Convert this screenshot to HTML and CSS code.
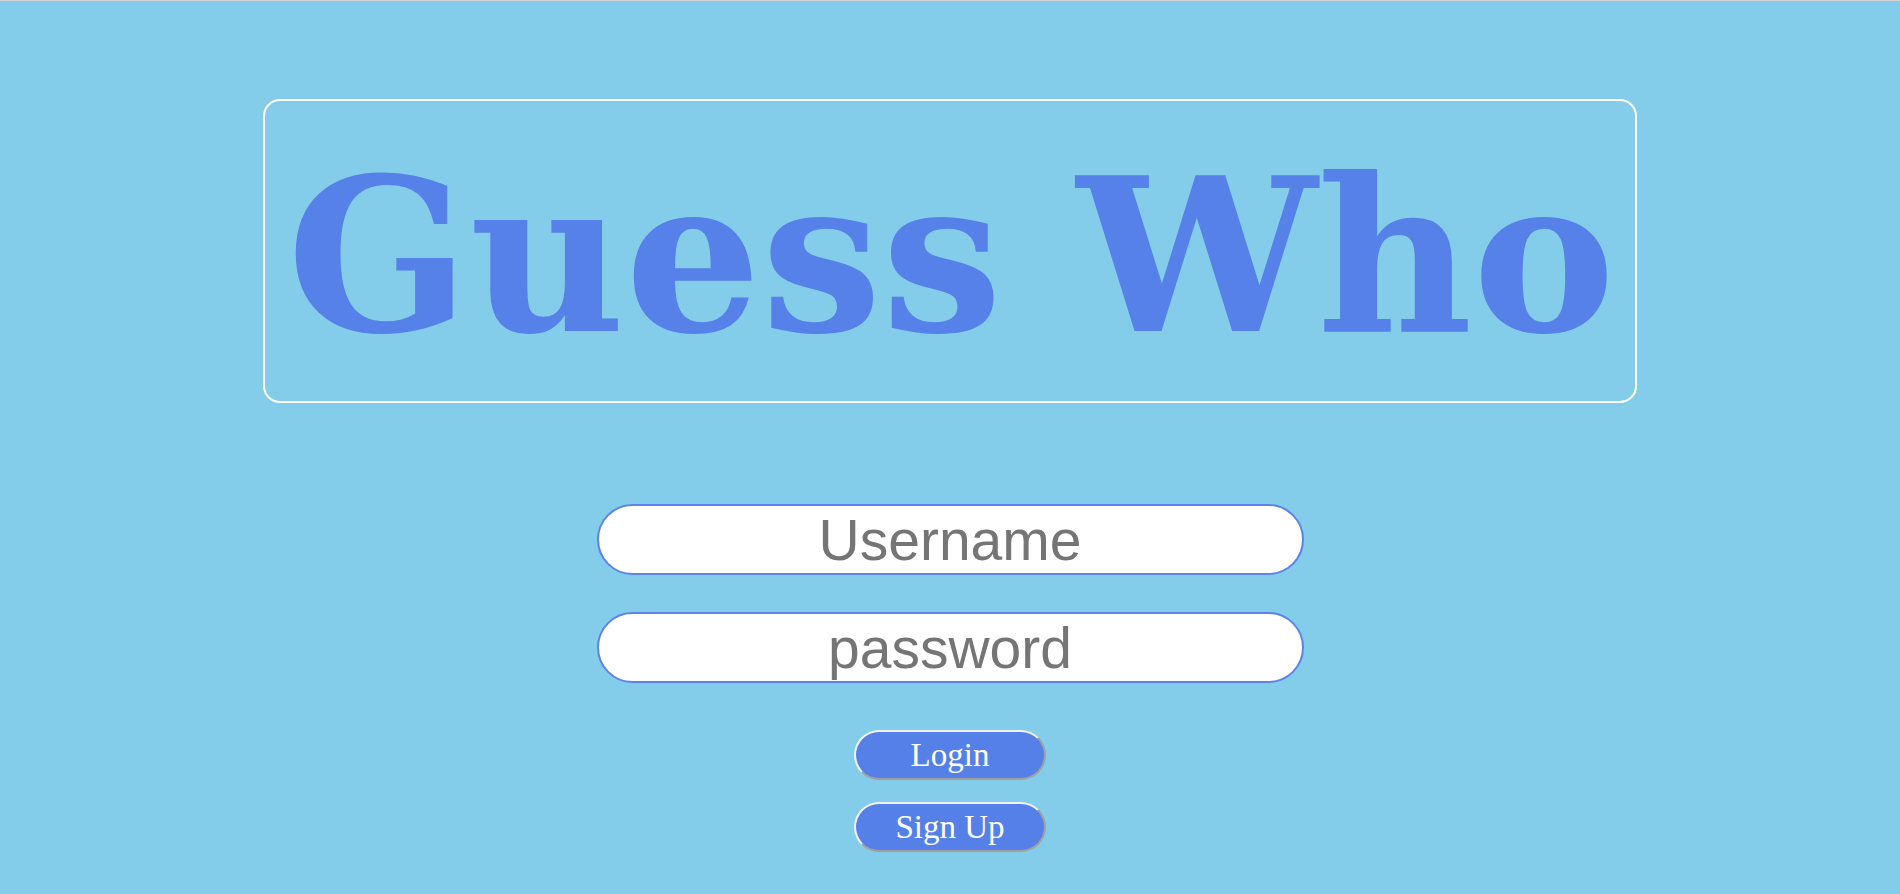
FILE: index.html
```html
<!DOCTYPE html>
<html lang="en">
<head>
<meta charset="utf-8">
<title>Guess Who</title>
<link rel="stylesheet" href="styles.css">
</head>
<body>
<div class="page">
  <header class="title-box">
    <h1 class="title">Guess Who</h1>
  </header>
  <form class="login-form">
    <input class="field" type="text" placeholder="Username">
    <input class="field" type="password" placeholder="password">
    <div class="actions">
      <button class="btn" type="button">Login</button>
      <button class="btn" type="button">Sign Up</button>
    </div>
  </form>
</div>
</body>
</html>
```

FILE: styles.css
```css
html, body {
  margin: 0;
  padding: 0;
  background: #84cdea;
}

.page {
  border-top: 1px solid #d4d4d4;
  min-height: 893px;
  box-sizing: border-box;
}

.title-box {
  width: 1374px;
  height: 304px;
  box-sizing: border-box;
  margin: 98px auto 0;
  border: 2px solid #ffffff;
  border-radius: 17px;
  display: flex;
  align-items: center;
  justify-content: center;
  padding-top: 10px;
  padding-left: 2px;
}

.title {
  margin: 0;
  font-family: "DejaVu Serif", serif;
  font-weight: bold;
  font-size: 214px;
  line-height: 1;
  color: #5681e8;
  white-space: nowrap;
}

.login-form {
  display: flex;
  flex-direction: column;
  align-items: center;
  margin-top: 101px;
}

.field {
  width: 707px;
  height: 71px;
  box-sizing: border-box;
  border: 2px solid #5a84e8;
  border-radius: 36px;
  background: #ffffff;
  font-family: "Liberation Sans", Arial, sans-serif;
  font-size: 57px;
  color: #333;
  text-align: center;
  padding: 0 20px;
  margin: 0 0 37px;
  outline: none;
}

.field::placeholder {
  color: #757575;
  opacity: 1;
}

.actions {
  display: flex;
  flex-direction: column;
  align-items: center;
  gap: 22px;
  margin-top: 10px;
}

.btn {
  width: 192px;
  height: 50px;
  box-sizing: border-box;
  border-style: solid;
  border-width: 2px;
  border-color: #f2f2f2 #a0a0a0 #a0a0a0 #f2f2f2;
  border-radius: 25px;
  background: #5580e8;
  color: #ffffff;
  font-family: "Liberation Serif", "Times New Roman", serif;
  font-size: 33px;
  line-height: 1;
  padding: 0;
  display: flex;
  align-items: center;
  justify-content: center;
  cursor: pointer;
}
```
